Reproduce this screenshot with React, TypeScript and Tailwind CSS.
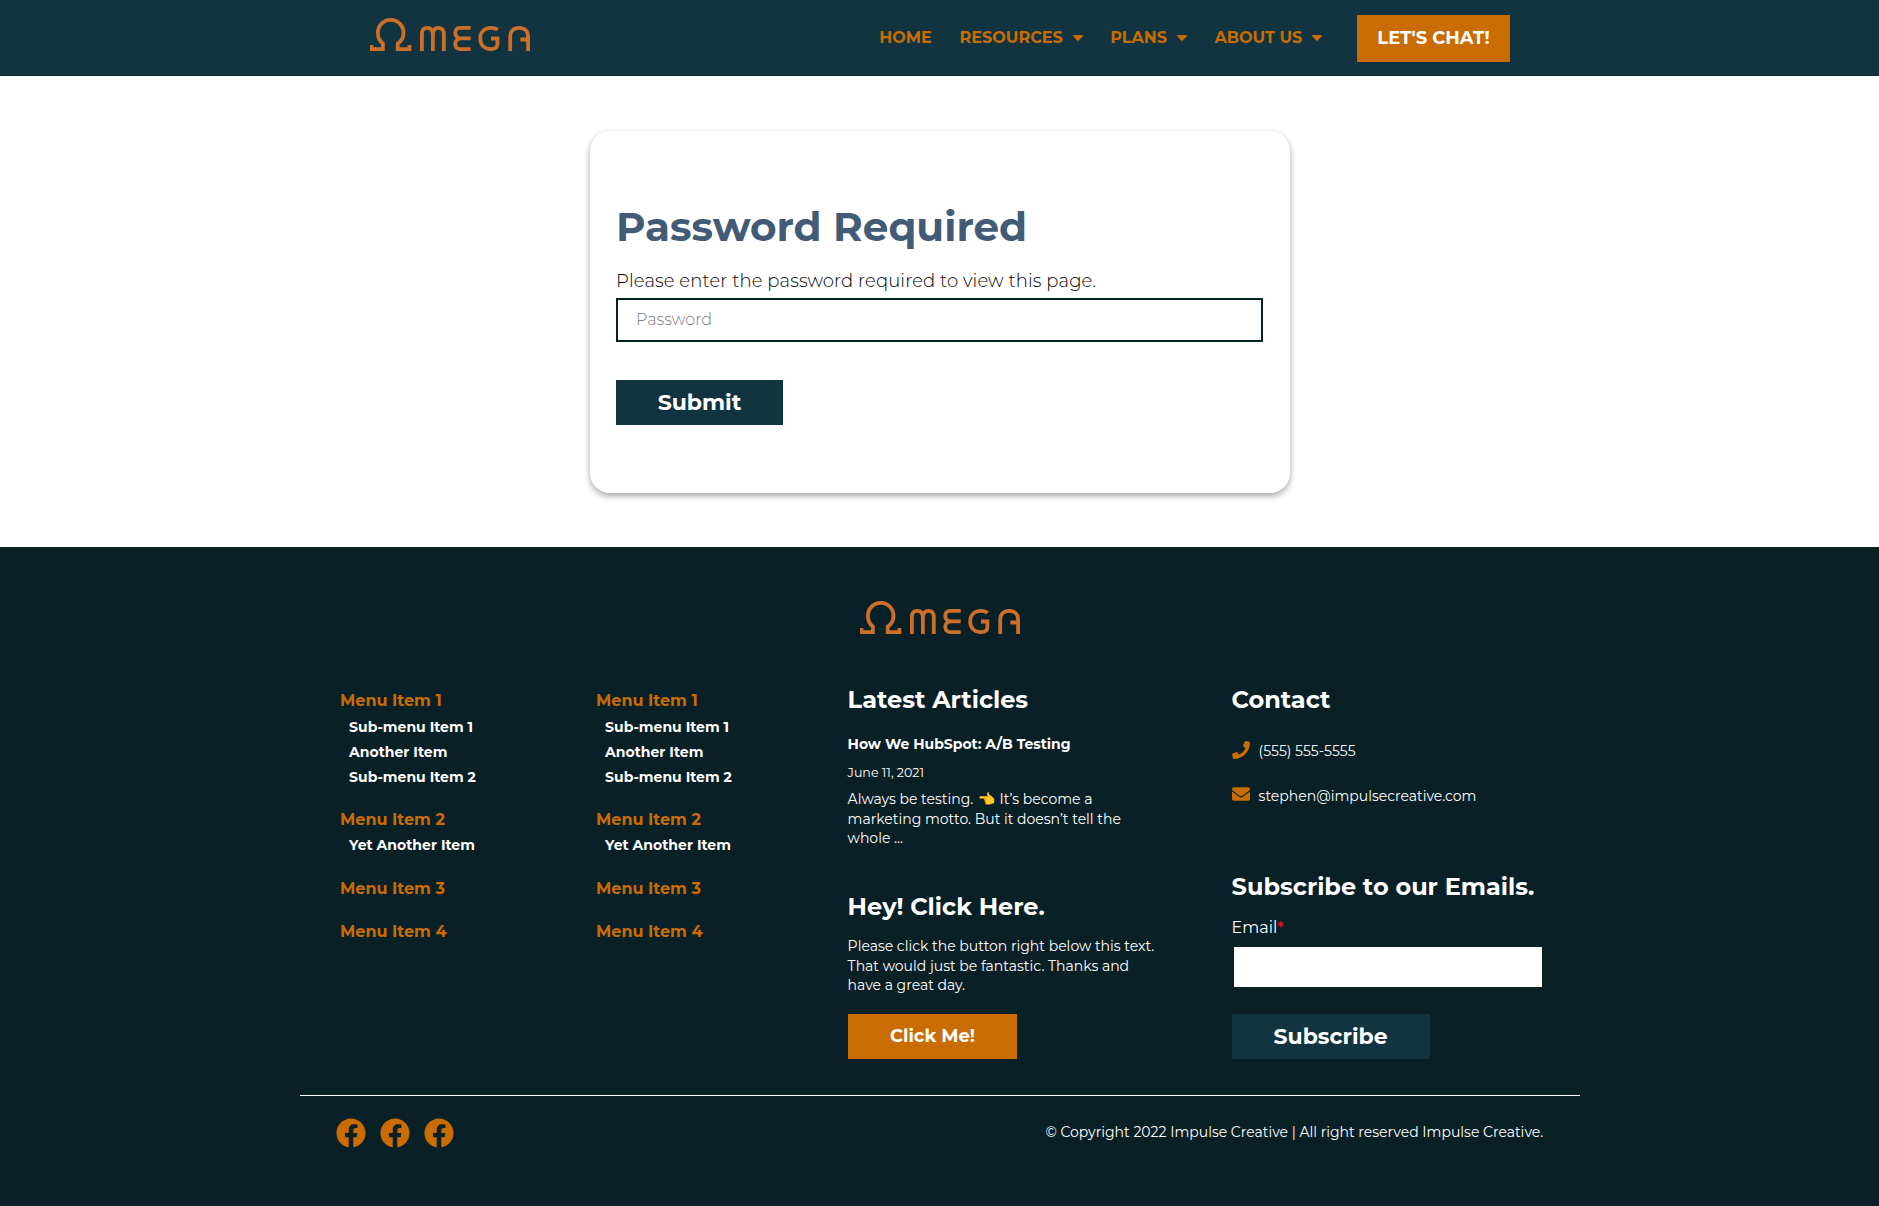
import React from "react";
import { FaEnvelope, FaFacebook, FaPhone } from "react-icons/fa";

function OmegaLogo() {
  return (
    <svg width="160" height="33" viewBox="0 0 160 33" fill="none" stroke="#cc6f29" strokeWidth="3.8" aria-label="Omega" className="block shrink-0">
      <path d="M1.5 27V31.1H12.9V25.6C9.4 23 7.9 19 7.9 14.8A12.8 12.9 0 0 1 33.5 14.8C33.5 19 32 23 27.7 25.6V31.1H39.4V27" />
      <path d="M51.9 33V16C51.9 11.5 54 9.9 57.2 9.9S62.9 12 62.9 17V33M62.9 17C62.9 12 65.2 9.9 68.4 9.9S73.8 11.5 73.8 16V33" />
      <path d="M100.7 9.9H90C83.5 9.9 83.5 20.3 91 20.3H100.7M91 20.3C83.5 20.3 83.5 31.1 90 31.1H100.7" />
      <path d="M127.6 12C126 10.4 123.5 9.9 121 9.9C114 9.9 110.2 14.5 110.2 20.5S114 31.1 121 31.1C124.5 31.1 127.4 29.6 127.4 26V20.5H121" />
      <path d="M140.2 33V19C140.2 13 144 9.9 149.2 9.9S158.1 13 158.1 19V33M158.1 21.5H150.4" />
    </svg>
  );
}

function Caret() {
  return (
    <svg width="10" height="6" viewBox="0 0 10 6" fill="#c96c02" className="mt-[10px] ml-[9.8px] shrink-0">
      <path d="M1 0H9C9.9 0 10.2 .9 9.6 1.5L5.7 5.6C5.3 6 4.7 6 4.3 5.6L.4 1.5C-.2 .9 .1 0 1 0Z" />
    </svg>
  );
}

const navItems = [
  { label: "HOME", caret: false },
  { label: "RESOURCES", caret: true },
  { label: "PLANS", caret: true },
  { label: "ABOUT US", caret: true },
];

const footerMenu = [
  { label: "Menu Item 1", items: ["Sub-menu Item 1", "Another Item", "Sub-menu Item 2"], gap: "mt-1", listGap: "mt-0.5" },
  { label: "Menu Item 2", items: ["Yet Another Item"], gap: "mt-[18px]", listGap: "mt-px" },
  { label: "Menu Item 3", items: [], gap: "mt-[19px]", listGap: "" },
  { label: "Menu Item 4", items: [], gap: "mt-[18px]", listGap: "" },
];

function FooterMenu({ className }: { className: string }) {
  return (
    <nav className={className}>
      {footerMenu.map((group) => (
        <div key={group.label} className={group.gap}>
          <a className="block text-[16px] leading-[25px] font-bold text-[#c96c02]">{group.label}</a>
          {group.items.length > 0 && (
            <ul className={`${group.listGap} flex flex-col gap-px pl-[9px]`}>
              {group.items.map((item) => (
                <li key={item} className="text-[14px] leading-6 font-bold">{item}</li>
              ))}
            </ul>
          )}
        </div>
      ))}
    </nav>
  );
}

export default function App() {
  return (
    <div className="flex h-[1206px] flex-col bg-white font-['Montserrat','Inter',sans-serif] whitespace-nowrap text-black">
      <header className="flex h-[76px] shrink-0 items-start justify-between border-b border-[#102a37] bg-[#123440] pr-[369px] pl-[370px]">
        <div className="pt-[18px]">
          <OmegaLogo />
        </div>
        <div className="flex items-start">
          <nav className="mt-[25px] mr-[35px] flex gap-[27.8px]">
            {navItems.map((item) => (
              <a key={item.label} className="flex text-[16px] leading-[25px] font-bold text-[#c96c02]">
                {item.label}
                {item.caret && <Caret />}
              </a>
            ))}
          </nav>
          <a className="mt-[15px] h-[47px] w-[153px] bg-[#c96c02] pt-[11px] text-center text-[18px] leading-6 font-bold text-white">
            LET'S CHAT!
          </a>
        </div>
      </header>

      <main className="h-[471px] shrink-0 pt-[55px]">
        <form className="mx-auto h-[362px] w-[700px] rounded-[20px] bg-white px-[26.5px] pt-[71px] shadow-[0_3px_6px_rgba(0,0,0,0.36)]">
          <h1 className="text-[40.5px] leading-[49px] font-bold text-[#425b76]">Password Required</h1>
          <label className="mt-[18px] block text-[18px] leading-6 font-light tracking-[0.12px]">
            Please enter the password required to view this page.
          </label>
          <input
            type="password"
            placeholder="Password"
            className="mt-[5px] block h-[44px] w-full border-2 border-[#0a2027] pb-px pl-[18px] text-[16px] font-light placeholder:text-[#808080]"
          />
          <button type="button" className="mt-[38px] block h-[45px] w-[167px] bg-[#123440] text-center text-[22px] leading-[27px] font-bold text-white">
            Submit
          </button>
        </form>
      </main>

      <footer className="flex-1 bg-[#0a2027] text-white">
        <div className="mx-auto w-[1280px]">
          <div className="flex justify-center pt-[54px]">
            <OmegaLogo />
          </div>
          <div className="mt-[50px] flex h-[375px] pl-[40.6px]">
            <FooterMenu className="w-[256px]" />
            <FooterMenu className="w-[251.5px]" />

            <div className="w-[384px]">
              <h2 className="text-[24px] leading-[31px] font-bold">Latest Articles</h2>
              <h3 className="mt-[17px] text-[14px] leading-6 font-bold">How We HubSpot: A/B Testing</h3>
              <p className="mt-[9px] text-[12.6px] leading-[15px]">June 11, 2021</p>
              <p className="mt-[10px] text-[14px] leading-[19.6px]">
                Always be testing. <span className="inline-block h-[14px] w-[19px] pl-px text-[14px] leading-[14px]">👈</span> It’s become a
                <br />
                marketing motto. But it doesn’t tell the
                <br />
                whole ...
              </p>
              <h2 className="mt-[42px] text-[24px] leading-[31px] font-bold">Hey! Click Here.</h2>
              <p className="mt-[15.4px] text-[14px] leading-[19.6px]">
                Please click the button right below this text.
                <br />
                That would just be fantastic. Thanks and
                <br />
                have a great day.
              </p>
              <a className="mt-[18px] ml-[0.4px] block h-[45px] w-[169px] bg-[#c96c02] pt-[11px] text-center text-[18px] leading-[22px] font-bold">
                Click Me!
              </a>
            </div>

            <div>
              <h2 className="text-[24px] leading-[31px] font-bold">Contact</h2>
              <div className="mt-6 flex items-start gap-[9px] text-[14px] leading-6">
                <FaPhone className="mt-0.5 size-[18px] text-[#c96c02]" />
                <span>(555) 555-5555</span>
              </div>
              <div className="mt-[21px] flex items-start gap-[9px] text-[14px] leading-6">
                <FaEnvelope className="mt-px size-[18px] text-[#c96c02]" />
                <span>stephen@impulsecreative.com</span>
              </div>
              <h2 className="mt-[63px] text-[24px] leading-[31px] font-bold">Subscribe to our Emails.</h2>
              <label className="mt-[13px] block text-[16px] leading-[25px]">
                Email<span className="font-medium text-[#f0141e]">*</span>
              </label>
              <input type="email" className="mt-[7px] ml-[2.4px] block h-10 w-[308px] bg-white px-3 text-black" />
              <button type="button" className="mt-[27px] block h-[45px] w-[198px] bg-[#123440] text-center text-[22px] leading-[27px] font-bold">
                Subscribe
              </button>
            </div>
          </div>
          <div className="mt-9 flex items-start justify-between border-t border-white pr-[36.3px] pl-[36.5px]">
            <div className="flex gap-[14px] pt-[22px] text-[#c96c02]">
              <FaFacebook size={30} />
              <FaFacebook size={30} />
              <FaFacebook size={30} />
            </div>
            <p className="pt-6 text-[14px] leading-6">© Copyright 2022 Impulse Creative | All right reserved Impulse Creative.</p>
          </div>
        </div>
      </footer>
    </div>
  );
}
